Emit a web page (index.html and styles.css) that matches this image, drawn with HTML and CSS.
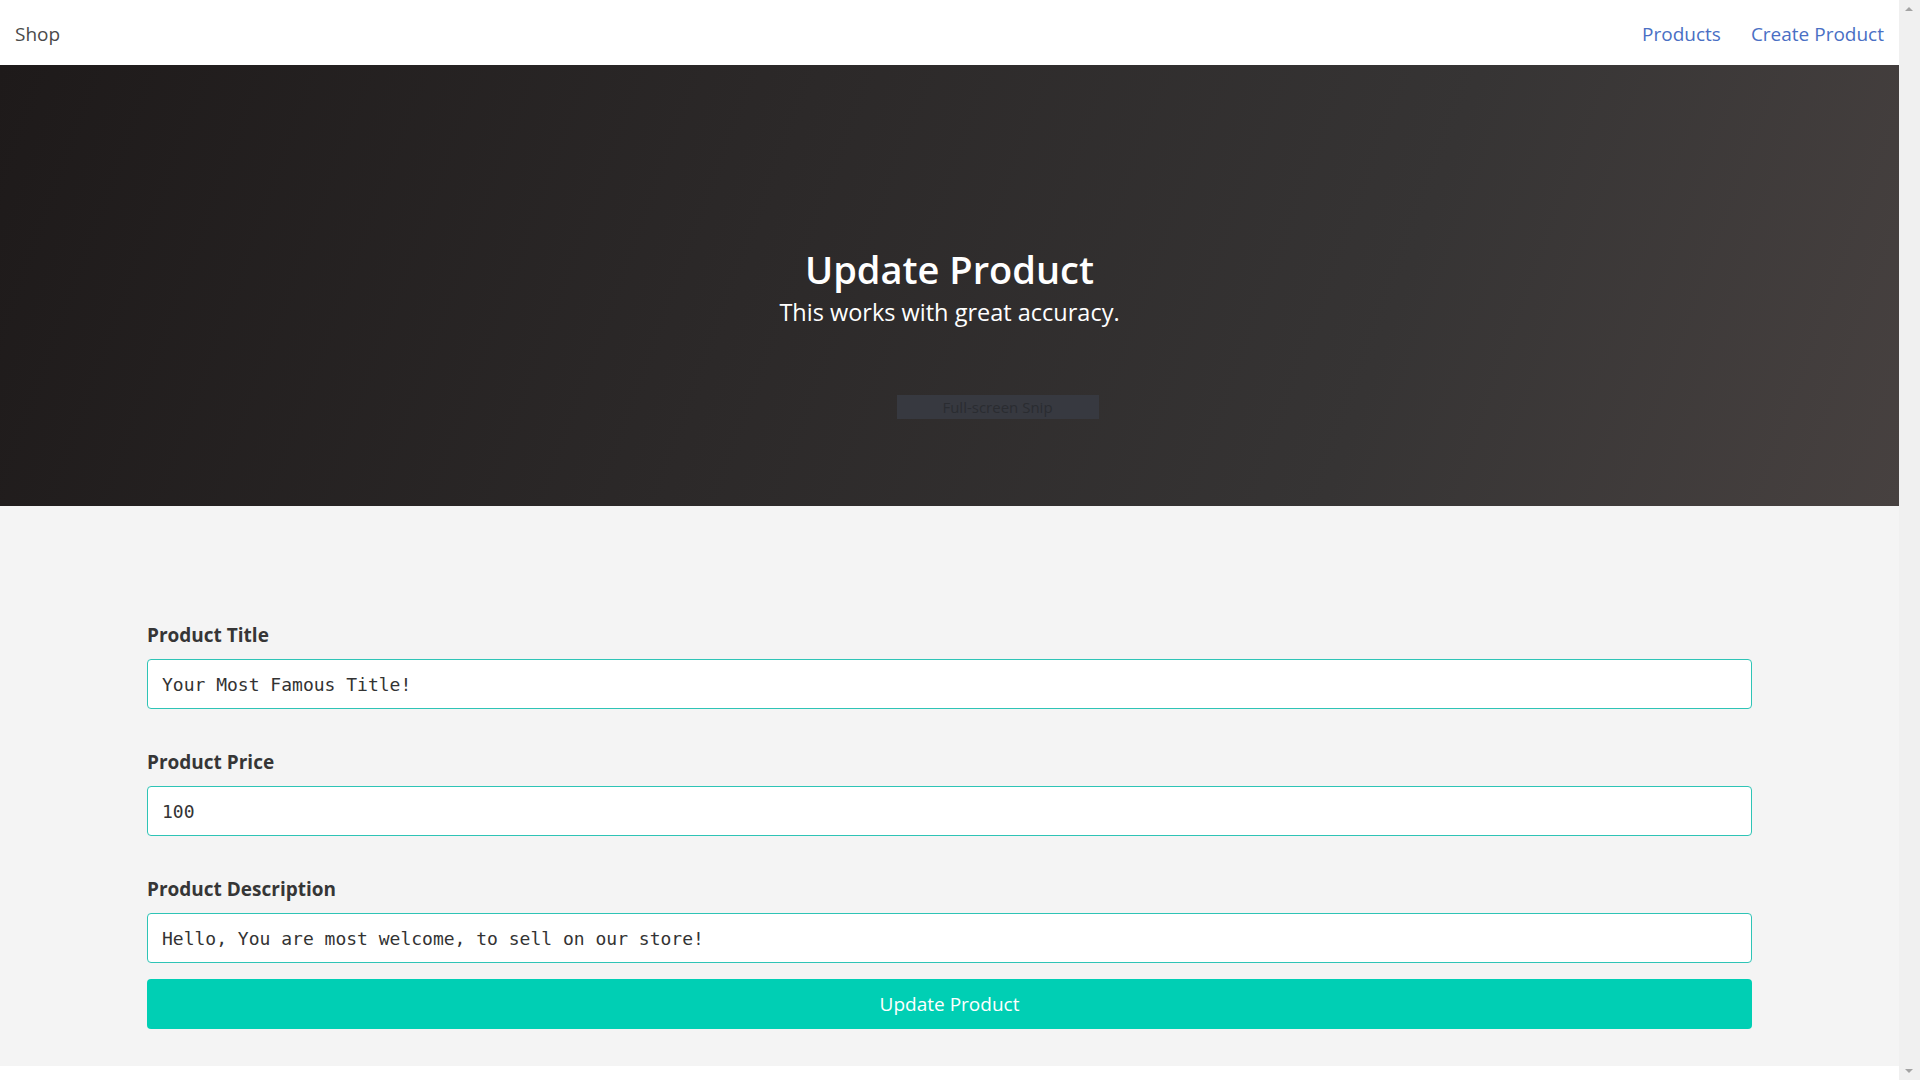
FILE: index.html
```html
<!DOCTYPE html>
<html lang="en">
<head>
<meta charset="utf-8">
<title>Update Product</title>
<link rel="stylesheet" href="styles.css">
</head>
<body>
<div class="page">
  <nav class="navbar">
    <a class="brand" href="#">Shop</a>
    <div class="nav-links">
      <a href="#">Products</a>
      <a href="#">Create Product</a>
    </div>
  </nav>
  <header class="hero">
    <h1 class="hero-title">Update Product</h1>
    <p class="hero-sub">This works with great accuracy.</p>
    <div class="snip">Full-screen Snip</div>
  </header>
  <main class="main">
    <form class="form">
      <div class="field">
        <label class="label">Product Title</label>
        <input class="input" type="text" value="Your Most Famous Title!">
      </div>
      <div class="field">
        <label class="label">Product Price</label>
        <input class="input" type="text" value="100">
      </div>
      <div class="field last">
        <label class="label">Product Description</label>
        <input class="input" type="text" value="Hello, You are most welcome, to sell on our store!">
      </div>
      <button class="btn" type="button">Update Product</button>
    </form>
  </main>
</div>
<div class="scrollbar">
  <span class="arrow up"></span>
  <span class="arrow down"></span>
</div>
</body>
</html>
```
FILE: styles.css
```css
* { box-sizing: border-box; }
html, body { margin: 0; padding: 0; height: 100%; }
body {
  display: flex;
  background: #ffffff;
  font-family: "Open Sans", "Noto Sans", sans-serif;
  color: #363636;
  overflow: hidden;
}
.page { flex: 1; min-width: 0; }
.navbar {
  height: 65px;
  display: flex;
  align-items: center;
  justify-content: space-between;
  padding: 2px 15px 0;
  background: #fff;
}
.brand {
  font-size: 19px;
  color: #4a4a4a;
  text-decoration: none;
}
.nav-links { display: flex; gap: 30px; }
.nav-links a {
  font-size: 19px;
  color: #4a6fc4;
  text-decoration: none;
}
.hero {
  height: 441px;
  background: linear-gradient(110deg, #1e1a1a 0%, #2c2929 40%, #363434 72%, #474140 100%);
  display: flex;
  flex-direction: column;
  align-items: center;
  padding-top: 180px;
  color: #fff;
}
.hero-title {
  margin: 0;
  font-size: 38px;
  line-height: 48px;
  font-weight: 600;
}
.hero-sub {
  margin: 3px 0 0;
  font-size: 23.5px;
  line-height: 32px;
}
.snip {
  margin-top: 67px;
  margin-left: 96px;
  width: 202px;
  height: 24px;
  background: #373940;
  color: #2a2c31;
  font-size: 15px;
  line-height: 24px;
  text-align: center;
}
.main {
  background: #f4f4f4;
  padding: 116px 147px 37px;
}
.form { display: flex; flex-direction: column; }
.field { display: flex; flex-direction: column; margin-bottom: 40px; }
.field.last { margin-bottom: 16px; }
.label {
  font-size: 19px;
  font-weight: 700;
  line-height: 26px;
  color: #363636;
  margin-bottom: 11px;
}
.input {
  height: 50px;
  border: 1px solid #2ec4b6;
  border-radius: 4px;
  background: #fff;
  padding: 0 14px;
  font-family: "DejaVu Sans Mono", "Liberation Mono", monospace;
  font-size: 18px;
  color: #333;
}
.btn {
  height: 50px;
  border: none;
  border-radius: 4px;
  background: #00cfb4;
  color: #fff;
  font-family: "Open Sans", "Noto Sans", sans-serif;
  font-size: 19px;
}
.scrollbar {
  width: 21px;
  height: 100vh;
  background: #f0f0f0;
  position: relative;
}
.arrow {
  position: absolute;
  left: 6px;
  width: 0;
  height: 0;
  border-left: 4px solid transparent;
  border-right: 4px solid transparent;
}
.arrow.up { top: 7px; border-bottom: 4px solid #a3a3a3; }
.arrow.down { bottom: 7px; border-top: 4px solid #a3a3a3; }
```
